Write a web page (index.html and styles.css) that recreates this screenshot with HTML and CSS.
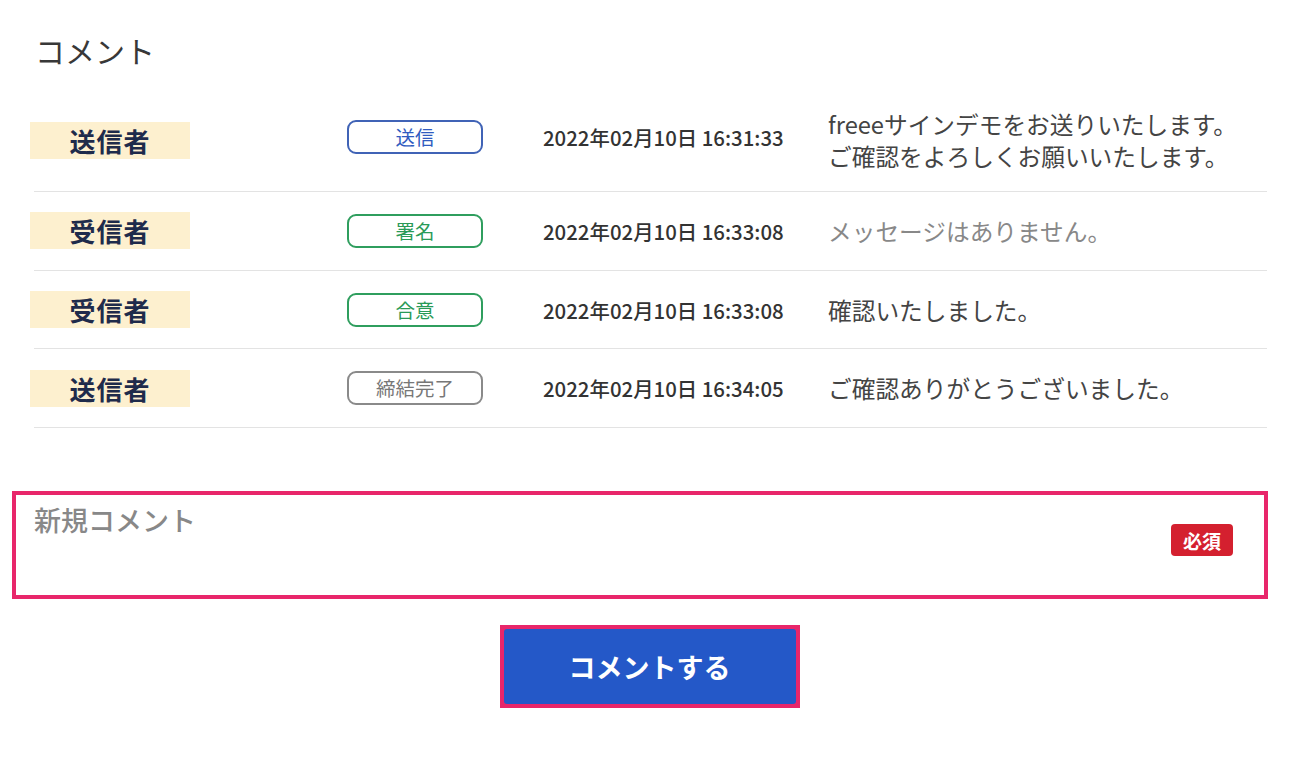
FILE: index.html
```html
<!DOCTYPE html>
<html lang="ja">
<head>
<meta charset="utf-8">
<link rel="stylesheet" href="styles.css">
</head>
<body>
<div class="page">
  <h2 class="title">コメント</h2>
  <div class="list">
    <div class="row row-first">
      <div class="cell-role"><span class="role">送信者</span></div>
      <div class="cell-status"><span class="status status-blue">送信</span></div>
      <div class="date">2022年02月10日 16:31:33</div>
      <div class="msg">freeeサインデモをお送りいたします。<br>ご確認をよろしくお願いいたします。</div>
    </div>
    <div class="row">
      <div class="cell-role"><span class="role">受信者</span></div>
      <div class="cell-status"><span class="status status-green">署名</span></div>
      <div class="date">2022年02月10日 16:33:08</div>
      <div class="msg msg-empty">メッセージはありません。</div>
    </div>
    <div class="row">
      <div class="cell-role"><span class="role">受信者</span></div>
      <div class="cell-status"><span class="status status-green">合意</span></div>
      <div class="date">2022年02月10日 16:33:08</div>
      <div class="msg">確認いたしました。</div>
    </div>
    <div class="row">
      <div class="cell-role"><span class="role">送信者</span></div>
      <div class="cell-status"><span class="status status-gray">締結完了</span></div>
      <div class="date">2022年02月10日 16:34:05</div>
      <div class="msg">ご確認ありがとうございました。</div>
    </div>
  </div>

  <div class="new-comment">
    <div class="placeholder">新規コメント</div>
    <span class="required">必須</span>
  </div>

  <div class="actions">
    <button class="submit"><span class="submit-inner">コメントする</span></button>
  </div>
</div>
</body>
</html>
```

FILE: styles.css
```css
* { box-sizing: border-box; }
html, body { margin: 0; padding: 0; background: #fff; }
body {
  font-family: "Noto Sans CJK JP", "Noto Sans", sans-serif;
  color: #333;
}
.page {
  width: 1299px;
  padding: 30px 0 0 0;
}
.title {
  margin: 0 0 23px 35px;
  font-size: 30px;
  line-height: 40px;
  font-weight: 400;
  color: #383838;
}
.list {
  margin: 0 32px 0 34px;
}
.row {
  display: grid;
  grid-template-columns: 313px 196px 285px 1fr;
  align-items: center;
  min-height: 78.7px;
  padding: 17px 0;
  border-bottom: 1px solid #e3e3e3;
}
.row-first { padding: 15px 0 19px; }
.row-first .cell-status, .row-first .date { margin-top: -6px; }
.cell-role { margin-left: -4px; }
.role {
  display: flex;
  align-items: center;
  justify-content: center;
  width: 160px;
  height: 37px;
  background: #fdf0cf;
  color: #1f2b4b;
  font-size: 26px;
  font-weight: 700;
  letter-spacing: 1px;
}
.status {
  display: flex;
  align-items: center;
  justify-content: center;
  width: 136px;
  height: 34px;
  border: 2px solid;
  border-radius: 9px;
  font-size: 19.5px;
  line-height: 1;
}
.status-blue { border-color: #4063b6; color: #2f5bc0; }
.status-green { border-color: #2f9e5e; color: #2a9a57; }
.status-gray { border-color: #8a8a8a; color: #777; }
.date {
  font-size: 20.4px;
  font-weight: 500;
  color: #333;
  white-space: nowrap;
}
.msg {
  font-size: 23.7px;
  line-height: 32px;
  color: #444;
}
.msg-empty { color: #888; }

.new-comment {
  position: relative;
  margin: 63px 31px 0 12px;
  height: 108px;
  border: 4px solid #e8266a;
  padding: 8px 18px;
}
.placeholder {
  font-size: 27px;
  line-height: 34px;
  color: #888;
  font-weight: 500;
}
.required {
  position: absolute;
  right: 31px;
  top: 29px;
  width: 62px;
  height: 32px;
  display: flex;
  align-items: center;
  justify-content: center;
  background: #d4202f;
  color: #fff;
  border-radius: 4px;
  font-size: 19px;
  font-weight: 700;
}
.actions {
  display: flex;
  justify-content: center;
  margin-top: 26px;
}
.submit {
  width: 300px;
  height: 83px;
  padding: 0;
  border: 4px solid #e8266a;
  background: #e8266a;
  font-family: inherit;
}
.submit-inner {
  display: flex;
  align-items: center;
  justify-content: center;
  width: 100%;
  height: 100%;
  background: #2458c8;
  border-radius: 3px;
  color: #fff;
  font-size: 27px;
  font-weight: 700;
}
```
